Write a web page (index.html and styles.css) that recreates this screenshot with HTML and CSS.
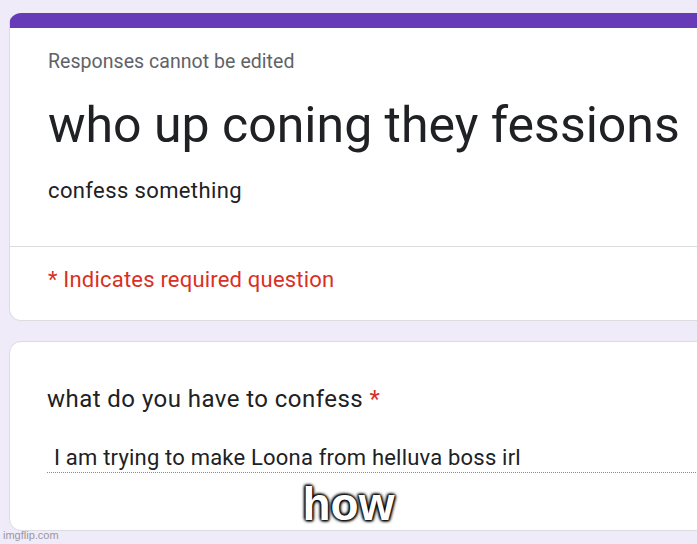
FILE: index.html
```html
<!DOCTYPE html>
<html lang="en">
<head>
  <meta charset="utf-8">
  <title>who up coning they fessions</title>
  <link rel="stylesheet" href="styles.css">
</head>
<body>
  <div id="page">
    <div class="card head-card">
      <p class="notice">Responses cannot be edited</p>
      <h1 class="title">who up coning they fessions</h1>
      <p class="desc">confess something</p>
      <div class="required-row">
        <p class="required">* Indicates required question</p>
      </div>
    </div>

    <div class="card question-card">
      <p class="question">what do you have to confess <span class="star">*</span></p>
      <div class="answer">I am trying to make Loona from helluva boss irl</div>
    </div>

    <div class="caption">how</div>
    <div class="watermark">imgflip.com</div>
  </div>
</body>
</html>
```

FILE: styles.css
```css
body {
  margin: 0;
  background-color: #efebf8;
  font-family: Roboto, Arial, sans-serif;
  color: #202124;
}
#page {
  position: relative;
  width: 697px;
  height: 544px;
  overflow: hidden;
  padding-top: 13px;
  box-sizing: border-box;
}
.card {
  width: 740px;
  margin-left: 9px;
  background-color: #fff;
  border: 1px solid #dadce0;
  border-radius: 12px;
  box-sizing: border-box;
}
.head-card {
  border-top: 15px solid #673ab7;
  padding-top: 22px;
}
.head-card p,
.head-card h1 {
  margin: 0;
  padding-left: 38px;
}
.notice {
  font-size: 19.5px;
  line-height: 24px;
  letter-spacing: 0.05px;
  color: #5f6368;
}
.title {
  margin-top: 21px !important;
  font-size: 50px;
  line-height: 60px;
  font-weight: 400;
}
.desc {
  margin-top: 22px !important;
  font-size: 22px;
  line-height: 28px;
  letter-spacing: 0.38px;
  padding-bottom: 41px;
}
.required-row {
  border-top: 1px solid #dadce0;
  padding: 19px 0 26px;
}
.required {
  font-size: 22px;
  line-height: 28px;
  letter-spacing: 0.2px;
  color: #d93025;
}
.question-card {
  margin-top: 20px;
  padding: 42px 0 57px 37px;
}
.question {
  margin: 0;
  font-size: 24px;
  line-height: 30px;
  letter-spacing: 0.45px;
}
.star {
  color: #d93025;
}
.answer {
  margin-top: 30px;
  padding-left: 7px;
  font-size: 22px;
  line-height: 28px;
  letter-spacing: 0.2px;
  border-bottom: 1px dotted #8a8a8a;
}
.caption {
  position: absolute;
  left: 0;
  right: 0;
  top: 481px;
  text-align: center;
  font-family: "Liberation Sans", Arial, sans-serif;
  font-weight: bold;
  font-size: 46px;
  line-height: 46px;
  color: #fff;
  text-shadow: 0 0 2px #000, 0 0 3px #000, 0 0 4px #000, 1px 1px 3px #000, -1px -1px 3px #000;
}
.watermark {
  position: absolute;
  left: 3px;
  top: 528px;
  font-family: "Liberation Sans", Arial, sans-serif;
  font-size: 11px;
  line-height: 14px;
  color: #9a97a0;
}
```
